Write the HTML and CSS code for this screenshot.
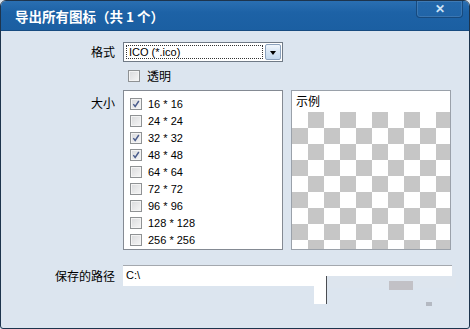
FILE: index.html
```html
<!DOCTYPE html>
<html lang="zh-CN">
<head>
    <meta charset="UTF-8">
    <title>导出所有图标</title>
    <link rel="stylesheet" href="styles.css">
</head>
<body>
    <div class="window">
        <div class="titlebar">
            <span class="title">导出所有图标（共 1 个）</span>
            <span class="close">&#x2715;</span>
        </div>
        <div class="content">
            <div class="label">格式</div>
            <div class="select">
                <span class="select-text"><span class="focus">ICO (*.ico)</span></span>
                <span class="select-btn"><span class="arrow"></span></span>
            </div>

            <div></div>
            <div class="check-row">
                <span class="box"></span><span class="cn">透明</span>
            </div>

            <div class="label label-top">大小</div>
            <div class="sizes">
                <ul class="size-list">
                    <li><span class="box checked"><svg viewBox="0 0 12 12"><path d="M2.8 6.2 L5 9 L9.4 2.4"/></svg></span>16 * 16</li>
                    <li><span class="box"></span>24 * 24</li>
                    <li><span class="box checked"><svg viewBox="0 0 12 12"><path d="M2.8 6.2 L5 9 L9.4 2.4"/></svg></span>32 * 32</li>
                    <li><span class="box checked"><svg viewBox="0 0 12 12"><path d="M2.8 6.2 L5 9 L9.4 2.4"/></svg></span>48 * 48</li>
                    <li><span class="box"></span>64 * 64</li>
                    <li><span class="box"></span>72 * 72</li>
                    <li><span class="box"></span>96 * 96</li>
                    <li><span class="box"></span>128 * 128</li>
                    <li><span class="box"></span>256 * 256</li>
                </ul>
                <div class="preview">
                    <div class="preview-title">示例</div>
                    <div class="checker"></div>
                </div>
            </div>

            <div class="label label-bottom">保存的路径</div>
            <div class="path">C:\</div>
        </div>

        <!-- redraw glitches around the path field -->
        <div class="glitch glitch-gap"></div>
        <div class="glitch glitch-white"></div>
        <div class="glitch glitch-grey"></div>
        <div class="glitch glitch-dot"></div>
    </div>
</body>
</html>
```

FILE: styles.css
```css
body {
    margin: 0;
    background-color: #dce5ef;
    font-family: "Liberation Sans", "Noto Sans CJK SC", sans-serif;
}
.window {
    position: relative;
    width: 470px;
    height: 329px;
    box-sizing: border-box;
    border: 1px solid #1d344d;
    border-radius: 6px 6px 3px 3px;
    background-color: #dce5ef;
    overflow: hidden;
}
.titlebar {
    display: flex;
    align-items: flex-start;
    height: 30px;
    box-sizing: border-box;
    border-bottom: 1px solid #174b80;
    background: linear-gradient(#2a6fb2, #1d62a6 40%, #1b5fa2);
}
.title {
    margin: 7px 0 0 14px;
    color: #fff;
    font-family: "Noto Sans CJK SC", sans-serif;
    font-weight: bold;
    font-size: 13.5px;
    line-height: 16px;
}
.close {
    margin-left: auto;
    margin-right: 6px;
    width: 47px;
    height: 17px;
    box-sizing: border-box;
    border: 1px solid #174a7e;
    border-top: none;
    border-radius: 0 0 4px 4px;
    background: linear-gradient(#2468ab, #2064a7);
    box-shadow: inset 0 0 0 1px rgba(255,255,255,0.12);
    color: #cfe3f6;
    font-size: 12px;
    font-weight: bold;
    line-height: 16px;
    text-align: center;
}
.content {
    display: grid;
    grid-template-columns: 114px 1fr;
    grid-template-rows: 20px 28px 160px 36px;
    column-gap: 8px;
    padding-top: 11px;
}
.label {
    align-self: center;
    text-align: right;
    font-family: "Noto Sans CJK SC", sans-serif;
    font-size: 12px;
    line-height: 16px;
    color: #000;
}
.label-top {
    align-self: start;
    padding-top: 5px;
}
.label-bottom {
    align-self: end;
    line-height: 21px;
}
.select {
    display: flex;
    width: 160px;
    height: 20px;
    box-sizing: border-box;
    border: 1px solid #707a86;
    background-color: #fff;
    padding: 1px;
}
.select-text {
    flex: 1;
    display: flex;
    padding: 1px 2px 1px 1px;
}
.focus {
    flex: 1;
    border: 1px dotted #333;
    padding-left: 2px;
    font-size: 11px;
    line-height: 13px;
    color: #000;
}
.select-btn {
    width: 16px;
    display: flex;
    align-items: center;
    justify-content: center;
    box-sizing: border-box;
    border: 1px solid #8ca2bd;
    border-radius: 2px;
    background: linear-gradient(#f1f6fc, #d6e5f4 50%, #c4d9ef);
}
.arrow {
    width: 0;
    height: 0;
    border-left: 3px solid transparent;
    border-right: 3px solid transparent;
    border-top: 4px solid #000;
    margin-top: 1px;
}
.check-row {
    display: flex;
    align-items: center;
    padding-left: 5px;
    gap: 7px;
}
.cn {
    font-family: "Noto Sans CJK SC", sans-serif;
    font-size: 12px;
    line-height: 16px;
}
.box {
    width: 12px;
    height: 12px;
    box-sizing: border-box;
    border: 1px solid #8f9294;
    background: linear-gradient(135deg, #d9dadc, #f6f6f6);
    box-shadow: inset 0 0 0 1px #f4f4f4;
    flex-shrink: 0;
}
.box svg {
    display: block;
    width: 10px;
    height: 10px;
}
.box svg path {
    fill: none;
    stroke: #4a5c8c;
    stroke-width: 1.7;
}
.sizes {
    display: flex;
    gap: 8px;
}
.size-list {
    width: 160px;
    height: 160px;
    box-sizing: border-box;
    margin: 0;
    padding: 4px 0 0 6px;
    list-style: none;
    border: 1px solid #848a93;
    background-color: #fff;
}
.size-list li {
    display: flex;
    align-items: center;
    gap: 6px;
    height: 17px;
    font-size: 11px;
    color: #000;
}
.preview {
    display: flex;
    flex-direction: column;
    width: 160px;
    height: 160px;
    box-sizing: border-box;
    border: 1px solid #9aa1aa;
    background-color: #fff;
}
.preview-title {
    height: 21px;
    padding: 2px 0 0 4px;
    box-sizing: border-box;
    font-family: "Noto Sans CJK SC", sans-serif;
    font-size: 12px;
    line-height: 16px;
}
.checker {
    flex: 1;
    background: repeating-conic-gradient(#c6c6c6 0 25%, #fff 0 50%) 0 0 / 32px 32px;
}
.path {
    align-self: end;
    width: 329px;
    height: 21px;
    box-sizing: border-box;
    border-top: 1px solid #a4a8ae;
    background-color: #fff;
    padding: 3px 0 0 3px;
    font-size: 11px;
    color: #000;
}
.glitch {
    position: absolute;
}
.glitch-gap {
    left: 325px;
    top: 275px;
    width: 130px;
    height: 12px;
    background-color: #dde5ee;
}
.glitch-white {
    left: 313px;
    top: 275px;
    width: 12px;
    height: 28px;
    background-color: #fff;
    border-right: 1px solid #4a4d52;
}
.glitch-grey {
    left: 388px;
    top: 280px;
    width: 24px;
    height: 9px;
    background-color: #c2c1c6;
}
.glitch-dot {
    left: 425px;
    top: 301px;
    width: 6px;
    height: 4px;
    background-color: #b4b9c2;
}
```
